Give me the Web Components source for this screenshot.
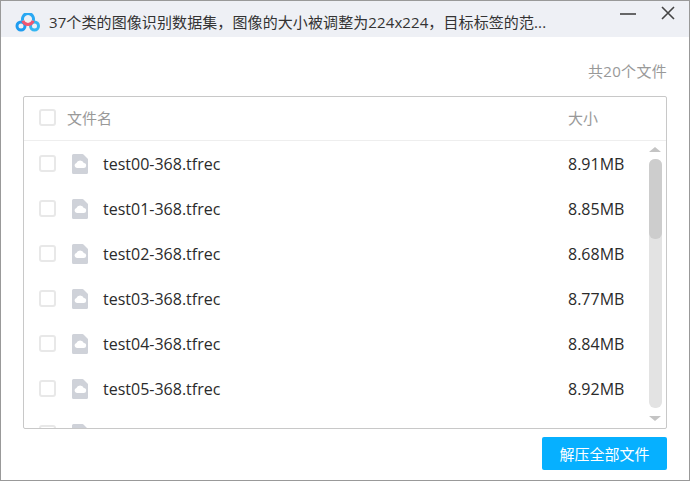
<!DOCTYPE html>
<html lang="zh">
<head>
<meta charset="utf-8">
<style>
  html, body { margin: 0; height: 100%; background: #fff; }
  body { font-family: "Open Sans", "Noto Sans CJK SC", sans-serif; overflow: hidden; }
</style>
</head>
<body>
<unzip-dialog>
  <span slot="title">37个类的图像识别数据集，图像的大小被调整为224x224，目标标签的范...</span>
  <span slot="count">共20个文件</span>
  <file-table>
    <file-row name="test00-368.tfrec" size="8.91MB"></file-row>
    <file-row name="test01-368.tfrec" size="8.85MB"></file-row>
    <file-row name="test02-368.tfrec" size="8.68MB"></file-row>
    <file-row name="test03-368.tfrec" size="8.77MB"></file-row>
    <file-row name="test04-368.tfrec" size="8.84MB"></file-row>
    <file-row name="test05-368.tfrec" size="8.92MB"></file-row>
    <file-row name="test06-368.tfrec" size="8.80MB"></file-row>
  </file-table>
</unzip-dialog>

<script>
// unzip-dialog: window frame, title bar, count label, footer button
class UnzipDialog extends HTMLElement {
  constructor(){
    super();
    this.root = this.attachShadow({mode: 'open'});
    this.root.innerHTML = `
    <style>
    :host {
      border: 1px solid #999;
      box-sizing: border-box;
      color: #333;
      display: flex;
      flex-direction: column;
      height: 481px;
      width: 690px;
    }
    .bar {
      align-items: center;
      background-color: #eef0f5;
      display: flex;
      flex: none;
      font-size: 15px;
      height: 36px;
      letter-spacing: 0.1px;
      padding-left: 14px;
    }
    .logo { flex: none; margin-right: 8px; margin-top: 7px; }
    .title { flex: 1; position: relative; top: 2px; white-space: nowrap; }
    .ctrl { flex: none; margin-right: 14px; position: relative; top: -6px; }
    .min { margin-right: 25px; top: -5px; }
    .count {
      color: #999;
      flex: none;
      font-size: 15px;
      letter-spacing: 0.3px;
      line-height: 20px;
      margin-top: 24px;
      padding-right: 22px;
      text-align: right;
    }
    .body { display: flex; flex: 1; flex-direction: column; min-height: 0; padding: 15px 22px 0; }
    .foot { display: flex; flex: none; justify-content: flex-end; padding: 8px 22px 10px; }
    button {
      background-color: #06b0ff;
      border: none;
      border-radius: 2px;
      color: #fff;
      font: inherit;
      font-size: 15px;
      height: 33px;
      padding: 0;
      width: 125px;
    }
    </style>
    <div class="bar">
      <svg class="logo" width="26" height="20" viewBox="0 0 26 20" fill="none" stroke-width="3">
        <circle cx="6" cy="13" r="4" stroke="#1f9cf0"/>
        <circle cx="19.500" cy="13" r="4" stroke="#35b6f2"/>
        <path d="M7.800 7.800A5.500 5.500 0 1 1 18.200 7.800" stroke="#2aa8f2"/>
        <path d="M7.800 7.800A5.500 5.500 0 0 0 18.200 7.800" stroke="#f2556f"/>
      </svg>
      <div class="title"><slot name="title"></slot></div>
      <svg class="ctrl min" width="16" height="2" viewBox="0 0 16 2"><path d="M0 1h16" stroke="#444" stroke-width="1.6"/></svg>
      <svg class="ctrl" width="14" height="14" viewBox="0 0 14 14"><path d="M1 1l12 12M13 1L1 13" stroke="#444" stroke-width="1.6"/></svg>
    </div>
    <div class="count"><slot name="count"></slot></div>
    <div class="body"><slot></slot></div>
    <div class="foot"><button>解压全部文件</button></div>`;
  }
}

// file-table: bordered list with a header and a scrolled body
class FileTable extends HTMLElement {
  constructor(){
    super();
    this.root = this.attachShadow({mode: 'open'});
    this.root.innerHTML = `
    <style>
    :host {
      border: 1px solid #c8c8c8;
      border-radius: 2px;
      display: flex;
      flex: 1;
      flex-direction: column;
      min-height: 0;
      overflow: hidden;
      position: relative;
    }
    .head {
      align-items: center;
      border-bottom: 1px solid #eee;
      box-sizing: border-box;
      color: #999;
      display: flex;
      flex: none;
      font-size: 15px;
      height: 44px;
      padding: 0 0 3px 15px;
    }
    .box {
      border: 2px solid #e8e8e8;
      border-radius: 3px;
      box-sizing: border-box;
      height: 17px;
      margin-right: 11px;
      width: 17px;
    }
    .name { flex: 1; }
    .size { width: 98px; }
    .list { flex: 1; min-height: 0; overflow: hidden; }
    .track {
      background-color: #e3e3e3;
      border-radius: 6px;
      bottom: 20px;
      position: absolute;
      right: 4px;
      top: 62px;
      width: 13px;
    }
    .thumb {
      background-color: #cdcdcd;
      border-radius: 6px;
      height: 80px;
      width: 13px;
    }
    .arrow {
      border-left: 6px solid transparent;
      border-right: 6px solid transparent;
      position: absolute;
      right: 5px;
    }
    .up { border-bottom: 5px solid #c4c4c4; top: 50px; }
    .down { border-top: 5px solid #c4c4c4; bottom: 7px; }
    </style>
    <div class="head">
      <div class="box"></div>
      <div class="name">文件名</div>
      <div class="size">大小</div>
    </div>
    <div class="list"><slot></slot></div>
    <div class="arrow up"></div>
    <div class="track"><div class="thumb"></div></div>
    <div class="arrow down"></div>`;
  }
}

// file-row: one archive entry
class FileRow extends HTMLElement {
  constructor(){
    super();
    this.root = this.attachShadow({mode: 'open'});
    this.root.innerHTML = `
    <style>
    :host {
      align-items: center;
      color: #2b2b2b;
      display: flex;
      font-size: 16px;
      height: 45px;
      padding-left: 15px;
    }
    .box {
      border: 2px solid #e8e8e8;
      border-radius: 3px;
      box-sizing: border-box;
      height: 17px;
      margin-right: 16px;
      width: 17px;
    }
    svg { flex: none; margin-right: 15px; }
    .name { flex: 1; }
    .size { width: 98px; }
    </style>
    <div class="box"></div>
    <svg width="16" height="20" viewBox="0 0 16 20">
      <path d="M1.500 0H10.500Q11 0 11.500 .5L15.500 4.500Q16 5 16 5.500V18.500A1.500 1.500 0 0 1 14.500 20H1.500A1.500 1.500 0 0 1 0 18.500V1.500A1.500 1.500 0 0 1 1.500 0Z" fill="#cfd2d9"/>
      <path d="M5 14a2.500 2.500 0 0 1-.6-4.900 3.900 3.900 0 0 1 7.400-.1 2.500 2.500 0 0 1-.3 5Z" fill="#fff"/>
    </svg>
    <div class="name"></div>
    <div class="size"></div>`;
    this.root.querySelector('.name').textContent = this.getAttribute('name');
    this.root.querySelector('.size').textContent = this.getAttribute('size');
  }
}

customElements.define('unzip-dialog', UnzipDialog);
customElements.define('file-table', FileTable);
customElements.define('file-row', FileRow);
</script>
</body>
</html>
